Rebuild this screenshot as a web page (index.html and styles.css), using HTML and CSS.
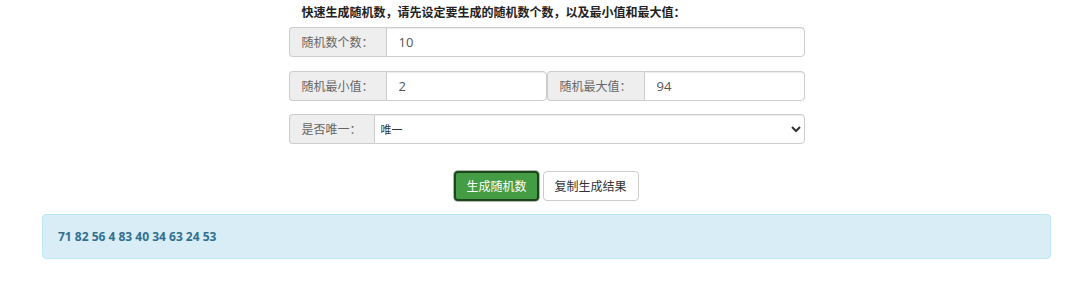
FILE: index.html
```html
<!DOCTYPE html>
<html>
<head>
  <meta charset="utf-8">
  <meta name="viewport" content="width=device-width, initial-scale=1">
  <title>随机数生成</title>
  <link rel="stylesheet" href="styles.css">
</head>
<body>
  <div class="page">
    <div class="form">
      <div class="title">快速生成随机数，请先设定要生成的随机数个数，以及最小值和最大值：</div>
      <div class="group row1">
        <span class="addon">随机数个数：</span>
        <input class="field" type="text" value="10">
      </div>
      <div class="pair row2">
        <div class="group">
          <span class="addon">随机最小值：</span>
          <input class="field" type="text" value="2">
        </div>
        <div class="group">
          <span class="addon">随机最大值：</span>
          <input class="field" type="text" value="94">
        </div>
      </div>
      <div class="group">
        <span class="addon">是否唯一：</span>
        <select class="field pick">
          <option>唯一</option>
          <option>不唯一</option>
        </select>
      </div>
      <div class="actions">
        <button class="btn btn-go">生成随机数</button>
        <button class="btn">复制生成结果</button>
      </div>
    </div>
    <div class="result">71 82 56 4 83 40 34 63 24 53</div>
  </div>
</body>
</html>
```
FILE: styles.css
```css
* {
  margin: 0;
  padding: 0;
  box-sizing: border-box;
}

body {
  font-family: "Open Sans", "Noto Sans CJK SC", sans-serif;
  font-size: 12px;
  color: #333;
  background: #fff;
}

.page {
  width: 1009px;
  margin-left: 42px;
}

.form {
  width: 516px;
  margin: 0 auto;
}

.title {
  font-weight: bold;
  line-height: 20px;
  padding: 3px 0 0 13px;
  margin-bottom: 4px;
  color: #222;
}

.group {
  display: flex;
  height: 30px;
  flex: 1;
  min-width: 0;
}

.row1 {
  margin-bottom: 14px;
}

.row2 {
  margin-bottom: 13px;
}

.pair {
  display: flex;
}

.pair .group {
  flex: 0 0 50%;
}

.addon {
  display: flex;
  align-items: center;
  padding: 0 12px;
  background: #eee;
  border: 1px solid #ccc;
  border-right: 0;
  border-radius: 4px 0 0 4px;
  color: #666;
  white-space: nowrap;
}

.field {
  flex: 1;
  width: 0;
  min-width: 0;
  height: 30px;
  border: 1px solid #ccc;
  border-radius: 0 4px 4px 0;
  padding: 0 12px;
  font-family: inherit;
  font-size: 13px;
  color: #555;
  background: #fff;
  box-shadow: inset 0 1px 1px rgba(0, 0, 0, .075);
}

.pick {
  font-size: 11px;
  color: #333;
  padding: 0 2px;
}

.actions {
  display: flex;
  justify-content: center;
  gap: 4px;
  margin-top: 27px;
  margin-bottom: 13px;
}

.btn {
  height: 30px;
  padding: 0 11px;
  font-family: inherit;
  font-size: 12px;
  color: #333;
  background: #fff;
  border: 1px solid #ccc;
  border-radius: 4px;
}

.btn-go {
  color: #fff;
  background: #449d44;
  border: 2px solid #1e461e;
  box-shadow: 0 0 0 1px #b0b8b0;
  padding: 0 10px;
}

.result {
  height: 45px;
  display: flex;
  align-items: center;
  padding: 0 15px;
  background: #d9edf7;
  border: 1px solid #bce8f1;
  border-radius: 4px;
  color: #31708f;
  font-weight: bold;
  font-size: 12px;
}
```
